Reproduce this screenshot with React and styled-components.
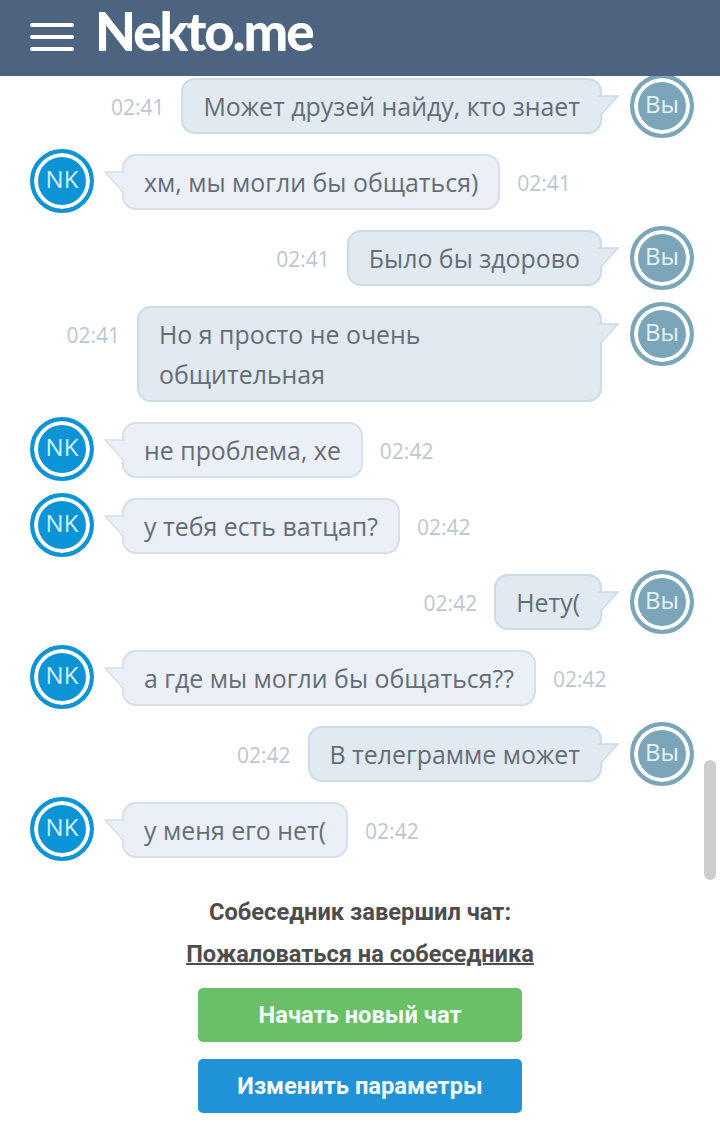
import React from "react";
import styled, { createGlobalStyle } from "styled-components";

const messages = [
  { id: 1, mine: true, text: "Может друзей найду, кто знает", time: "02:41" },
  { id: 2, mine: false, text: "хм, мы могли бы общаться)", time: "02:41" },
  { id: 3, mine: true, text: "Было бы здорово", time: "02:41" },
  { id: 4, mine: true, text: "Но я просто не очень общительная", time: "02:41" },
  { id: 5, mine: false, text: "не проблема, хе", time: "02:42" },
  { id: 6, mine: false, text: "у тебя есть ватцап?", time: "02:42" },
  { id: 7, mine: true, text: "Нету(", time: "02:42" },
  { id: 8, mine: false, text: "а где мы могли бы общаться??", time: "02:42" },
  { id: 9, mine: true, text: "В телеграмме может", time: "02:42" },
  { id: 10, mine: false, text: "у меня его нет(", time: "02:42" },
];

function Tail({ mine }) {
  const fill = mine ? "#e1e9f1" : "#eaf0f5";
  const stroke = mine ? "#cbdce9" : "#d5e0e9";
  return (
    <TailIcon $mine={mine} width="22" height="24" viewBox="0 0 22 24">
      {mine ? (
        <>
          <path d="M0 1 H20 L0 22 Z" fill={fill} />
          <path d="M0 1 H20 L2 21" fill="none" stroke={stroke} strokeWidth="1.5" />
        </>
      ) : (
        <>
          <path d="M22 1 H2 L22 22 Z" fill={fill} />
          <path d="M22 1 H2 L20 21" fill="none" stroke={stroke} strokeWidth="1.5" />
        </>
      )}
    </TailIcon>
  );
}

function Message({ mine, text, time }) {
  const avatar = <Avatar $mine={mine}>{mine ? "Вы" : "NK"}</Avatar>;
  const bubble = (
    <Bubble $mine={mine}>
      <Tail mine={mine} />
      {text}
    </Bubble>
  );
  const stamp = <Time>{time}</Time>;
  return mine ? (
    <Row $mine>
      {stamp}
      {bubble}
      {avatar}
    </Row>
  ) : (
    <Row>
      {avatar}
      {bubble}
      {stamp}
    </Row>
  );
}

function App() {
  return (
    <Page>
      <GlobalStyle />
      <Header>
        <Burger>
          <span />
          <span />
          <span />
        </Burger>
        <Logo>Nekto.me</Logo>
      </Header>
      <Chat>
        {messages.map((m) => (
          <Message key={m.id} {...m} />
        ))}
      </Chat>
      <Footer>
        <Status>Собеседник завершил чат:</Status>
        <Report href="#">Пожаловаться на собеседника</Report>
        <Button $color="#6abf69">Начать новый чат</Button>
        <Button $color="#1f92d8">Изменить параметры</Button>
      </Footer>
      <ScrollThumb />
    </Page>
  );
}

export default App;

const GlobalStyle = createGlobalStyle`
  html, body {
    margin: 0;
    padding: 0;
    background: #fff;
  }
`;

const Page = styled.div`
  position: relative;
  width: 720px;
  height: 1142px;
  overflow: hidden;
  background: #fff;
  font-family: "Open Sans", "Noto Sans", sans-serif;
`;

const Header = styled.header`
  position: relative;
  z-index: 2;
  display: flex;
  align-items: center;
  height: 76px;
  padding: 0 0 0 30px;
  box-sizing: border-box;
  background: #4d6480;
`;

const Burger = styled.div`
  display: flex;
  flex-direction: column;
  gap: 8px;
  width: 44px;
  margin-top: -3px;
  span {
    display: block;
    height: 4px;
    border-radius: 2px;
    background: #fff;
  }
`;

const Logo = styled.div`
  margin: -14px 0 0 21px;
  font-family: Lato, "Noto Sans", sans-serif;
  font-size: 53px;
  font-weight: 900;
  line-height: 60px;
  letter-spacing: -2px;
  color: #fff;
`;

const Chat = styled.div`
  display: flex;
  flex-direction: column;
  gap: 20px;
  padding-top: 2px;
`;

const Row = styled.div`
  display: flex;
  align-items: flex-start;
  justify-content: ${(p) => (p.$mine ? "flex-end" : "flex-start")};
  padding: ${(p) => (p.$mine ? "0 26px 0 0" : "0 0 0 30px")};
`;

const Avatar = styled.div`
  flex: none;
  display: flex;
  align-items: center;
  justify-content: center;
  box-sizing: border-box;
  width: 64px;
  height: 64px;
  margin: ${(p) => (p.$mine ? "-4px 0" : "-5px 0 -3px")};
  border-radius: 50%;
  border: 4px solid ${(p) => (p.$mine ? "#7ba6ba" : "#0d94d6")};
  box-shadow: inset 0 0 0 4px #fff;
  background: ${(p) => (p.$mine ? "#7ba6ba" : "#0d94d6")};
  color: ${(p) => (p.$mine ? "#e6f1f5" : "#d4f0fb")};
  font-size: 24px;
  line-height: 1;
  padding-bottom: 4px;
`;

const Bubble = styled.div`
  position: relative;
  box-sizing: border-box;
  max-width: 465px;
  margin: ${(p) => (p.$mine ? "0 28px 0 17px" : "0 17px 0 28px")};
  padding: 6px 20px;
  border: 2px solid ${(p) => (p.$mine ? "#cbdce9" : "#d5e0e9")};
  border-radius: 14px;
  background: ${(p) => (p.$mine ? "#e1e9f1" : "#eaf0f5")};
  color: #666d75;
  font-size: 24.9px;
  line-height: 40px;
`;

const TailIcon = styled.svg`
  position: absolute;
  top: 15px;
  ${(p) => (p.$mine ? "right: -20px;" : "left: -21px;")}
`;

const Time = styled.div`
  flex: none;
  height: 56px;
  color: #bcc6d0;
  font-size: 21px;
  line-height: 58px;
`;

const Footer = styled.div`
  display: flex;
  flex-direction: column;
  align-items: center;
  padding-top: 38px;
  color: #4d4d4d;
  font-family: Roboto, "Open Sans", sans-serif;
`;

const Status = styled.div`
  font-size: 23.7px;
  font-weight: 700;
  line-height: 32px;
`;

const Report = styled.a`
  margin-top: 10px;
  color: #4d4d4d;
  font-size: 23.6px;
  font-weight: 700;
  line-height: 32px;
  text-decoration: underline;
  text-decoration-thickness: 2px;
`;

const Button = styled.button`
  width: 324px;
  height: 54px;
  margin-top: 18px;
  border: none;
  border-radius: 5px;
  background: ${(p) => p.$color};
  color: #f4fbf6;
  font-family: inherit;
  font-size: 23.7px;
  font-weight: 700;
  padding: 0;
  & + & {
    margin-top: 17px;
  }
`;

const ScrollThumb = styled.div`
  position: absolute;
  top: 760px;
  right: 4px;
  width: 12px;
  height: 120px;
  border-radius: 6px;
  background: #cdcdcd;
`;
